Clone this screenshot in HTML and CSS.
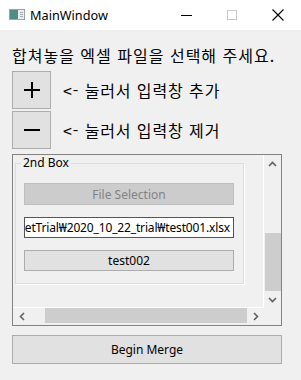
FILE: index.html
```html
<!DOCTYPE html>
<html lang="ko">
<head>
<meta charset="utf-8">
<title>MainWindow</title>
<link rel="stylesheet" href="styles.css">
</head>
<body>
<div class="window">
  <header class="titlebar">
    <svg class="app-icon" width="16" height="11" viewBox="0 0 16 11">
      <rect x="0.5" y="0.5" width="15" height="10" fill="#e8ecec" stroke="#9aa6a6"/>
      <rect x="1" y="1" width="8" height="9" fill="#4f8c83"/>
      <rect x="11" y="3" width="3" height="1" fill="#9fb0b0"/>
      <rect x="11" y="5" width="3" height="1" fill="#9fb0b0"/>
      <rect x="11" y="7" width="3" height="1" fill="#9fb0b0"/>
    </svg>
    <span class="title">MainWindow</span>
    <div class="caption-buttons">
      <span class="cap-btn">
        <svg width="11" height="11" viewBox="0 0 11 11"><line x1="0" y1="5.5" x2="11" y2="5.5" stroke="#000" stroke-width="1"/></svg>
      </span>
      <span class="cap-btn">
        <svg width="10" height="10" viewBox="0 0 10 10"><rect x="0.5" y="0.5" width="9" height="9" fill="none" stroke="#c8c8c8" stroke-width="1"/></svg>
      </span>
      <span class="cap-btn">
        <svg width="12" height="12" viewBox="0 0 12 12"><path d="M0.5 0.5 L11.5 11.5 M11.5 0.5 L0.5 11.5" stroke="#000" stroke-width="1.1" fill="none"/></svg>
      </span>
    </div>
  </header>

  <main class="content">
    <p class="prompt">합쳐놓을 엑셀 파일을 선택해 주세요.</p>

    <div class="tool-row first">
      <button class="square-btn" type="button" aria-label="추가">
        <svg width="18" height="18" viewBox="0 0 18 18"><path d="M9 1 V17 M1 9 H17" stroke="#000" stroke-width="2"/></svg>
      </button>
      <span class="hint">&lt;- 눌러서 입력창 추가</span>
    </div>
    <div class="tool-row">
      <button class="square-btn" type="button" aria-label="제거">
        <svg width="18" height="18" viewBox="0 0 18 18"><path d="M1 9 H17" stroke="#000" stroke-width="2"/></svg>
      </button>
      <span class="hint">&lt;- 눌러서 입력창 제거</span>
    </div>

    <div class="scroll-area">
      <div class="viewport">
        <fieldset class="group">
          <legend>2nd Box</legend>
          <button class="qbtn disabled" type="button" disabled>File Selection</button>
          <div class="line-edit"><span class="path">MergeSheetTrial₩2020_10_22_trial₩test001.xlsx</span></div>
          <button class="qbtn" type="button">test002</button>
        </fieldset>
      </div>
      <div class="vscroll">
        <span class="arrow-btn"><svg width="9" height="6" viewBox="0 0 9 6"><path d="M1 5 L4.5 1.5 L8 5" stroke="#606060" stroke-width="1.6" fill="none"/></svg></span>
        <div class="vtrack"><div class="vthumb"></div></div>
        <span class="arrow-btn"><svg width="9" height="6" viewBox="0 0 9 6"><path d="M1 1 L4.5 4.5 L8 1" stroke="#606060" stroke-width="1.6" fill="none"/></svg></span>
      </div>
      <div class="hscroll">
        <span class="arrow-btn"><svg width="6" height="9" viewBox="0 0 6 9"><path d="M5 1 L1.5 4.5 L5 8" stroke="#606060" stroke-width="1.6" fill="none"/></svg></span>
        <div class="htrack"><div class="hthumb"></div></div>
        <span class="arrow-btn"><svg width="6" height="9" viewBox="0 0 6 9"><path d="M1 1 L4.5 4.5 L1 8" stroke="#606060" stroke-width="1.6" fill="none"/></svg></span>
      </div>
      <div class="corner"></div>
    </div>

    <button class="qbtn merge" type="button">Begin Merge</button>
  </main>
</div>
</body>
</html>
```

FILE: styles.css
```css
* { box-sizing: border-box; }

html, body {
  margin: 0;
  padding: 0;
}

body {
  width: 301px;
  height: 380px;
  overflow: hidden;
  background: #f0f0f0;
  font-family: "Noto Sans", "Noto Sans CJK KR", sans-serif;
  color: #000;
}

.window {
  width: 301px;
  height: 380px;
  background: #f0f0f0;
}

.titlebar {
  height: 30px;
  background: #ffffff;
  display: flex;
  align-items: center;
}

.app-icon {
  margin-left: 9px;
  margin-top: -1px;
  flex: none;
}

.title {
  margin-left: 5px;
  font-size: 12.7px;
  line-height: 16px;
  font-family: "Noto Sans", sans-serif;
}

.caption-buttons {
  margin-left: auto;
  display: flex;
  height: 30px;
}

.cap-btn {
  width: 46px;
  height: 30px;
  display: flex;
  align-items: center;
  justify-content: center;
}

.content {
  padding: 0 19px 0 12px;
}

.prompt {
  margin: 14px 0 0 0;
  font-family: "Noto Sans CJK KR", sans-serif;
  font-size: 16px;
  line-height: 22px;
  letter-spacing: 1px;
  white-space: nowrap;
}

.tool-row {
  display: flex;
  align-items: center;
  margin-top: 2px;
}

.tool-row.first {
  margin-top: 5px;
}

.square-btn {
  width: 39px;
  height: 38px;
  margin: 0;
  padding: 0;
  background: #e1e1e1;
  border: 1px solid #adadad;
  display: flex;
  align-items: center;
  justify-content: center;
  flex: none;
}

.hint {
  margin-left: 12px;
  font-family: "Noto Sans CJK KR", sans-serif;
  font-size: 16px;
  line-height: 22px;
  letter-spacing: 0.9px;
  white-space: nowrap;
}

.scroll-area {
  margin-top: 5px;
  width: 270px;
  height: 172px;
  border: 1px solid #828282;
  display: grid;
  grid-template-columns: 251px 17px;
  grid-template-rows: 153px 17px;
}

.viewport {
  overflow: hidden;
  background: #f0f0f0;
  border-right: 1px solid #ffffff;
  border-bottom: 1px solid #ffffff;
  padding: 1px 0 0 2px;
}

.group {
  margin: 0;
  width: 229px;
  min-width: 0;
  border: 1px solid #dcdcdc;
  box-shadow: 1px 1px 0 #ffffff;
  padding: 13px 9px 12px 8px;
  display: flex;
  flex-direction: column;
  gap: 12px;
}

.group legend {
  font-size: 12px;
  line-height: 14px;
  padding: 0 2px;
  margin-left: -3px;
  font-family: "Noto Sans", sans-serif;
}

.qbtn {
  margin: 0;
  padding: 0;
  width: 100%;
  height: 21px;
  background: #e1e1e1;
  border: 1px solid #adadad;
  font-family: "Noto Sans", sans-serif;
  font-size: 12px;
  color: #000;
}

.qbtn.disabled {
  height: 22px;
  background: #cccccc;
  border-color: #bfbfbf;
  color: #838383;
}

.line-edit {
  height: 21px;
  min-width: 0;
  background: #ffffff;
  border: 1px solid #555555;
  overflow: hidden;
  direction: rtl;
  padding: 0 3px 0 0;
  font-family: "Noto Sans", "Noto Sans CJK KR", sans-serif;
  font-size: 12px;
  letter-spacing: -0.15px;
  line-height: 19px;
  white-space: nowrap;
}

.line-edit .path {
  direction: ltr;
  unicode-bidi: isolate;
}

.vscroll {
  display: flex;
  flex-direction: column;
  background: #f0f0f0;
}

.arrow-btn {
  flex: none;
  width: 17px;
  height: 17px;
  display: flex;
  align-items: center;
  justify-content: center;
}

.vtrack {
  flex: 1;
  display: flex;
  flex-direction: column;
  justify-content: flex-end;
}

.vthumb {
  height: 58px;
  margin-left: 1px;
  background: #cdcdcd;
}

.hscroll {
  display: flex;
  background: #f0f0f0;
}

.htrack {
  flex: 1;
  display: flex;
  justify-content: flex-end;
}

.hthumb {
  width: 202px;
  height: 15px;
  background: #cdcdcd;
}

.corner {
  background: #f0f0f0;
}

.merge {
  display: block;
  margin-top: 9px;
  width: 270px;
  height: 29px;
}
```
